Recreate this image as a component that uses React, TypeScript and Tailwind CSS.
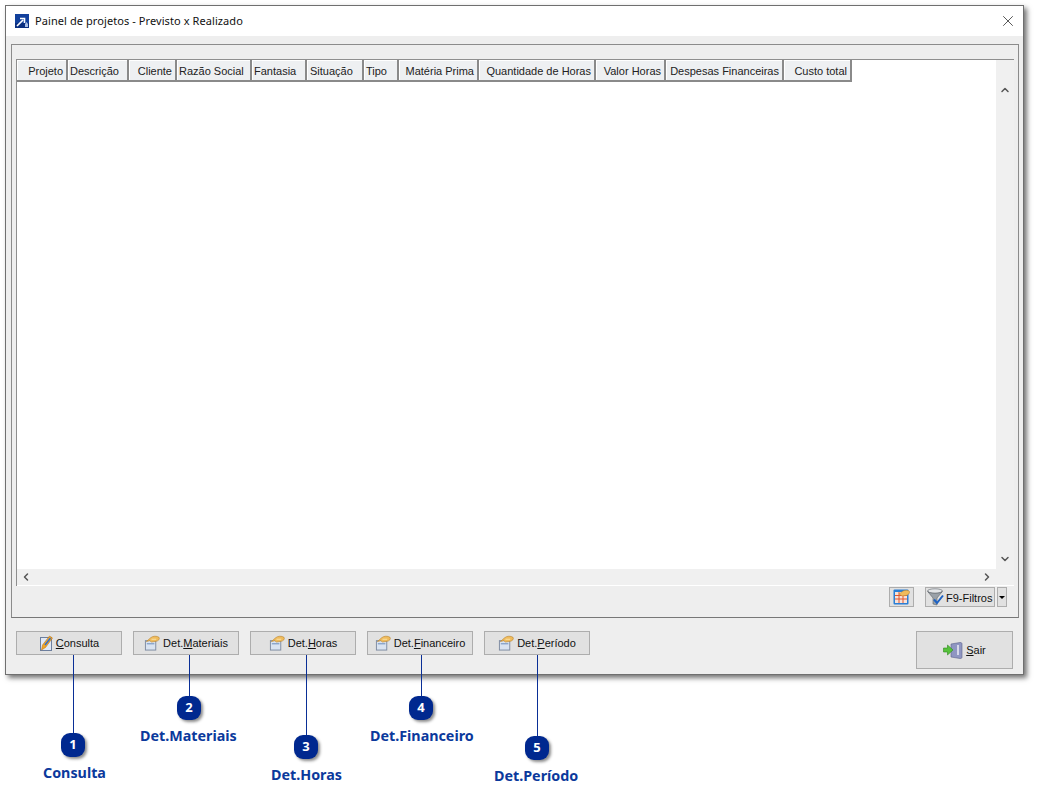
import { ChevronDown, ChevronLeft, ChevronRight, ChevronUp, X } from 'lucide-react'

const columns = [
  { label: 'Projeto', width: 'w-[51px]', align: 'justify-end pr-[3px]' },
  { label: 'Descrição', width: 'w-[61px]', align: 'justify-start pl-[2px]' },
  { label: 'Cliente', width: 'w-[48px]', align: 'justify-end pr-[3px]' },
  { label: 'Razão Social', width: 'w-[75px]', align: 'justify-start pl-[2px]' },
  { label: 'Fantasia', width: 'w-[55px]', align: 'justify-start pl-[2px]' },
  { label: 'Situação', width: 'w-[57px]', align: 'justify-start pl-[3px]' },
  { label: 'Tipo', width: 'w-[35px]', align: 'justify-start pl-[2px]' },
  { label: 'Matéria Prima', width: 'w-[80px]', align: 'justify-end pr-[3px]' },
  { label: 'Quantidade de Horas', width: 'w-[117px]', align: 'justify-end pr-[3px]' },
  { label: 'Valor Horas', width: 'w-[70px]', align: 'justify-end pr-[3px]' },
  { label: 'Despesas Financeiras', width: 'w-[118px]', align: 'justify-end pr-[3px]' },
  { label: 'Custo total', width: 'w-[68px]', align: 'justify-end pr-[3px]' },
]

function AppIcon() {
  return (
    <svg width="14" height="14" viewBox="0 0 14 14" className="shrink-0">
      <rect width="14" height="14" fill="#12409c" />
      <rect y="9" width="14" height="5" fill="#0b2f80" />
      <path d="M2 12 L8 6 M5 4.5 H9.5 V9" stroke="#fff" strokeWidth="1.6" fill="none" />
      <path d="M10 10 l1.5 -2 l1.5 2 v3 h-3 z" fill="#a9bfe6" />
    </svg>
  )
}

function NoteIcon() {
  return (
    <svg width="14" height="16" viewBox="0 0 14 16" className="shrink-0">
      <rect x="1.5" y="2.5" width="11" height="13" fill="#dfe8f6" stroke="#6d7f9e" />
      <path d="M2.5 15 L3.5 10 L10.5 1 L13.5 3 L6.5 12.5 Z" fill="#f0a526" stroke="#b96f10" strokeWidth="0.5" />
      <path d="M6 10 L11.5 3" stroke="#2f6fd0" strokeWidth="1.5" />
    </svg>
  )
}

function HandIcon() {
  return (
    <svg width="16" height="16" viewBox="0 0 17 16" className="shrink-0">
      <rect x="1.5" y="5.5" width="11" height="10" fill="#d9e3f1" stroke="#7d8aa0" />
      <rect x="3" y="8" width="8" height="1.5" fill="#8ba6cc" />
      <path d="M2.5 6.5 L7 2.5 C9 0.3 14 0.3 16 2 C17 3.8 15.5 5.7 13 6.2 L8 7 L6 5.5 Z" fill="#efbb5c" stroke="#b5812a" strokeWidth="0.6" />
      <path d="M8 4 H13" stroke="#fbe3a8" strokeWidth="1" />
    </svg>
  )
}

function GridHandIcon() {
  return (
    <svg width="17" height="16" viewBox="0 0 17 16">
      <rect x="0.5" y="0.5" width="15" height="15" rx="1" fill="#2a7fd6" />
      <rect x="2" y="3" width="12" height="11" fill="#f7e3da" />
      <path d="M2 6.5 H14 M2 10 H14 M6 3 V14 M10 3 V14" stroke="#e2572f" strokeWidth="1" />
      <path d="M6 5 L10 2 C12 1 15 1 16.5 2.5 C17 4.5 15 6 13 6.5 L9 7 Z" fill="#efbb5c" stroke="#b5812a" strokeWidth="0.5" />
    </svg>
  )
}

function FunnelIcon() {
  return (
    <svg width="18" height="18" viewBox="0 0 18 18" className="shrink-0">
      <ellipse cx="8" cy="3" rx="7.5" ry="2.2" fill="#e4e6e8" stroke="#70767c" strokeWidth="0.7" />
      <path d="M0.7 3.5 L6 10 V16 L10 17 V10 L15.3 3.5 C12 6 4 6 0.7 3.5 Z" fill="#9aa1a8" stroke="#5e646a" strokeWidth="0.6" />
      <path d="M7 11.5 L10 15 L16 7.5" stroke="#1d62c4" strokeWidth="2" fill="none" />
    </svg>
  )
}

function DoorIcon() {
  return (
    <svg width="20" height="17" viewBox="0 0 20 17" className="shrink-0">
      <path d="M8 2 L17 0.5 C18.5 0.5 19 1 19 2 V15 C19 16 18.5 16.5 17 16.5 L8 15 Z" fill="#8f96c2" stroke="#5b618c" strokeWidth="0.6" />
      <rect x="14" y="3" width="2" height="10" fill="#d5d8ea" />
      <path d="M0.5 6 H4.5 V3 L10 8 L4.5 13 V10 H0.5 Z" fill="#56c23b" stroke="#2f8a1f" strokeWidth="0.6" />
    </svg>
  )
}

function ActionButton({ icon, before, mnemonic, after }: { icon: React.ReactNode; before: string; mnemonic: string; after: string }) {
  return (
    <div className="flex h-[24px] w-[106px] items-center justify-center gap-[2px] border border-[#adadad] bg-[#e1e1e1] font-['Liberation_Sans',sans-serif] text-[11px] text-[#111]">
      {icon}
      <span className="ml-[1px] whitespace-nowrap pt-[1px]">
        {before}
        <span className="underline">{mnemonic}</span>
        {after}
      </span>
    </div>
  )
}

function Callout({ lineClass, badgeClass, labelClass, n, label }: { lineClass: string; badgeClass: string; labelClass: string; n: number; label: string }) {
  return (
    <>
      <div className={`absolute w-px bg-[#0a2f96] ${lineClass}`} />
      <div className={`absolute flex h-[24px] w-[24px] items-center justify-center rounded-[9px] bg-[#00288f] text-[13px] font-bold text-white shadow-[2px_2px_3px_rgba(0,0,0,0.45)] ${badgeClass}`}>
        {n}
      </div>
      <div className={`absolute whitespace-nowrap text-[14.3px] leading-[18px] font-bold text-[#0b399c] ${labelClass}`}>{label}</div>
    </>
  )
}

export default function App() {
  return (
    <div className="relative h-[802px] w-[1047px] overflow-hidden bg-white pl-[5px] pt-[5px] font-['Noto_Sans','Open_Sans',sans-serif]">
      <div className="flex h-[670px] w-[1019px] flex-col border border-[#6f6f6f] bg-[#eeeeee] shadow-[3px_3px_5px_rgba(0,0,0,0.55)]">
        <div className="flex h-[30px] shrink-0 items-center gap-[6px] bg-white pl-[9px] pr-[6px]">
          <AppIcon />
          <span className="text-[11px] tracking-[0.08px] text-[#111]">Painel de projetos - Previsto x Realizado</span>
          <X size={18} strokeWidth={1} className="ml-auto text-[#222]" />
        </div>

        <div className="ml-[5px] mt-[8px] flex h-[574px] w-[1008px] flex-col border border-[#8b8b8b] border-b-[#777] bg-[#eeeeee] px-[4px] pt-[14px]">
          <div className="flex h-[527px] flex-col border-l border-t border-[#8e8e8e] bg-white">
            <div className="flex min-h-0 flex-1">
              <div className="flex min-w-0 flex-1 flex-col">
                <div className="flex h-[22px] shrink-0 font-['Liberation_Sans',sans-serif] text-[11px] text-[#222]">
                  {columns.map(col => (
                    <div
                      key={col.label}
                      className={`flex shrink-0 items-center whitespace-nowrap border-b-2 border-r-2 border-[#8a8a8a] bg-[#eef0f2] pt-[2px] shadow-[inset_1px_1px_0_#fff] ${col.width} ${col.align}`}
                    >
                      {col.label}
                    </div>
                  ))}
                </div>
                <div className="flex-1 bg-white" />
              </div>
              <div className="flex w-[18px] shrink-0 flex-col items-center justify-between bg-[#f0f0f0] pb-[4px] pt-[24px]">
                <ChevronUp size={12} strokeWidth={3} className="text-[#555]" />
                <ChevronDown size={12} strokeWidth={3} className="text-[#555]" />
              </div>
            </div>
            <div className="flex h-[17px] shrink-0 items-center justify-between border-b border-white bg-[#f0f0f0] pl-[3px] pr-[21px]">
              <ChevronLeft size={12} strokeWidth={3} className="text-[#555]" />
              <ChevronRight size={12} strokeWidth={3} className="text-[#555]" />
            </div>
          </div>

          <div className="mt-[1px] flex items-start justify-end pr-[7px]">
            <div className="flex h-[20px] w-[25px] items-center justify-center border border-[#adadad] bg-[#e1e1e1]">
              <GridHandIcon />
            </div>
            <div className="ml-[11px] flex h-[20px] w-[70px] items-center gap-[1px] border border-[#adadad] bg-[#e1e1e1] pl-[1px] font-['Liberation_Sans',sans-serif] text-[11px] text-[#111]">
              <FunnelIcon />
              <span className="whitespace-nowrap pt-[2px]">F9-Filtros</span>
            </div>
            <div className="ml-[2px] flex h-[20px] w-[10px] items-center justify-center border border-[#adadad] bg-[#e1e1e1]">
              <div className="h-0 w-0 border-x-[3px] border-t-[3px] border-x-transparent border-t-black" />
            </div>
          </div>
        </div>

        <div className="mx-[10px] mt-[13px] flex items-start gap-[11px]">
          <ActionButton icon={<NoteIcon />} before="" mnemonic="C" after="onsulta" />
          <ActionButton icon={<HandIcon />} before="Det." mnemonic="M" after="ateriais" />
          <ActionButton icon={<HandIcon />} before="Det." mnemonic="H" after="oras" />
          <ActionButton icon={<HandIcon />} before="Det." mnemonic="F" after="inanceiro" />
          <ActionButton icon={<HandIcon />} before="Det." mnemonic="P" after="eríodo" />
          <div className="ml-auto flex h-[38px] w-[97px] items-center justify-center gap-[3px] border border-[#adadad] bg-[#e1e1e1] font-['Liberation_Sans',sans-serif] text-[11px] text-[#111]">
            <DoorIcon />
            <span className="pt-[1px]">
              <span className="underline">S</span>air
            </span>
          </div>
        </div>
      </div>

      <Callout n={1} label="Consulta" lineClass="left-[73px] top-[655px] h-[80px]" badgeClass="left-[61px] top-[733px]" labelClass="left-[43px] top-[764px]" />
      <Callout n={2} label="Det.Materiais" lineClass="left-[189px] top-[655px] h-[42px]" badgeClass="left-[177px] top-[696px]" labelClass="left-[140px] top-[727px]" />
      <Callout n={3} label="Det.Horas" lineClass="left-[306px] top-[655px] h-[81px]" badgeClass="left-[294px] top-[735px]" labelClass="left-[271px] top-[766px]" />
      <Callout n={4} label="Det.Financeiro" lineClass="left-[421px] top-[655px] h-[42px]" badgeClass="left-[409px] top-[696px]" labelClass="left-[370px] top-[727px]" />
      <Callout n={5} label="Det.Período" lineClass="left-[537px] top-[655px] h-[82px]" badgeClass="left-[525px] top-[736px]" labelClass="left-[494px] top-[767px]" />
    </div>
  )
}
